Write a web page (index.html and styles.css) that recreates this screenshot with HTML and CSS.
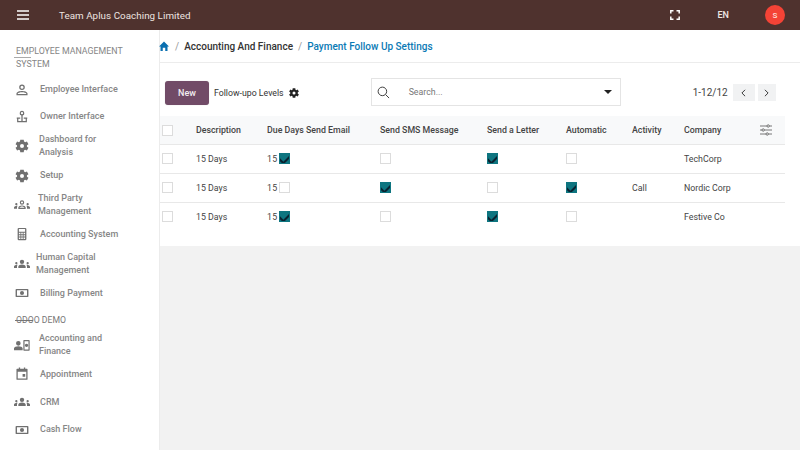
FILE: index.html
```html
<!DOCTYPE html>
<html lang="en">
<head>
<meta charset="utf-8">
<title>Payment Follow Up Settings</title>
<link rel="stylesheet" href="styles.css">
</head>
<body>
<header class="topbar">
  <svg class="burger" viewBox="0 0 12 10" width="12" height="10"><path d="M0 1h12M0 5h12M0 9h12" stroke="#fff" stroke-width="1.500"/></svg>
  <span class="company-name">Team Aplus Coaching Limited</span>
  <svg class="fullscreen" viewBox="0 0 10 10" width="10" height="10"><path d="M.8 3.500V.8h2.700M6.500 .8h2.700v2.700M9.200 6.500v2.700H6.500M3.500 9.200H.8V6.500" fill="none" stroke="#fff" stroke-width="1.500"/></svg>
  <span class="lang">EN</span>
  <span class="avatar">S</span>
</header>
<div class="body">
  <aside class="sidebar">
    <div class="section-title struck">EMPLOYEE MANAGEMENT<br>SYSTEM</div>
    <a class="item h27"><svg class="ico" viewBox="0 0 24 24"><path d="M12 2.500a4.800 4.800 0 1 1 0 9.600 4.800 4.800 0 0 1 0-9.600zm0 2.200a2.600 2.600 0 1 0 0 5.200 2.600 2.600 0 0 0 0-5.200zm0 9c3.500 0 9.500 1.300 9.500 4.300v3H2.500v-3c0-3 6-4.300 9.500-4.300zm0 2.200c-3.500 0-7.200 1.200-7.300 2.100v.8h14.600V18c-.1-.9-3.800-2.100-7.300-2.100z"/></svg><span>Employee Interface</span></a>
    <a class="item h27"><svg class="ico" viewBox="0 0 24 24"><path d="M12 1.500a4 4 0 0 1 1.100 7.850V19h5.200v-4H15v-2h6v2h-.6v6H3.600v-6H3v-2h6v2H5.700v4h5.200V9.350A4 4 0 0 1 12 1.500zm0 2.100a1.900 1.900 0 1 0 0 3.800 1.900 1.900 0 0 0 0-3.800z"/></svg><span>Owner Interface</span></a>
    <a class="item h31"><svg class="ico gear" viewBox="0 0 24 24"><path d="M19.400 13a7.500 7.500 0 0 0 0-2l2.300-1.800-2.300-4-2.700 1.100a7.500 7.500 0 0 0-1.700-1L14.600 2.500H9.400L9 5.300a7.500 7.500 0 0 0-1.700 1L4.600 5.200l-2.300 4L4.600 11a7.500 7.500 0 0 0 0 2l-2.300 1.800 2.300 4 2.700-1.100a7.500 7.500 0 0 0 1.700 1l.4 2.800h5.200l.4-2.800a7.500 7.500 0 0 0 1.700-1l2.700 1.100 2.300-4zM12 15a3 3 0 1 1 0-6 3 3 0 0 1 0 6z"/></svg><span class="shift-n1">Dashboard for<br>Analysis</span></a>
    <a class="item h29"><svg class="ico gear" viewBox="0 0 24 24"><path d="M19.400 13a7.500 7.500 0 0 0 0-2l2.300-1.800-2.300-4-2.700 1.100a7.500 7.500 0 0 0-1.700-1L14.600 2.500H9.400L9 5.300a7.500 7.500 0 0 0-1.700 1L4.600 5.200l-2.300 4L4.600 11a7.500 7.500 0 0 0 0 2l-2.300 1.800 2.300 4 2.700-1.100a7.500 7.500 0 0 0 1.700 1l.4 2.800h5.200l.4-2.800a7.500 7.500 0 0 0 1.700-1l2.700 1.100 2.300-4zM12 15a3 3 0 1 1 0-6 3 3 0 0 1 0 6z"/></svg><span>Setup</span></a>
    <a class="item h29"><svg class="ico wide" viewBox="0 0 24 24"><path d="M12 5a3.300 3.300 0 1 1 0 6.600A3.300 3.300 0 0 1 12 5zm0 1.700a1.600 1.600 0 1 0 0 3.200 1.600 1.600 0 0 0 0-3.200zM5.500 13.200c-.6.700-1 1.500-1 2.500v2H0v-2c0-1.700 3-2.500 5.500-2.500zm13 0c2.500 0 5.500.8 5.500 2.500v2h-4.500v-2c0-1-.4-1.800-1-2.500zM6.500 18v-2.300c0-2 3-3 5.500-3s5.500 1 5.500 3V18zm1.800-1.700h7.400c-.2-.9-2-1.900-3.700-1.900s-3.500 1-3.700 1.900zM3.500 9a1.700 1.700 0 1 1 0 3.400 1.700 1.700 0 0 1 0-3.400zm17 0a1.700 1.700 0 1 1 0 3.400 1.700 1.700 0 0 1 0-3.400z"/></svg><span class="shift-n2">Third Party<br>Management</span></a>
    <a class="item h30"><svg class="ico" viewBox="0 0 24 24"><path d="M6.500 1.500h11a2 2 0 0 1 2 2v17a2 2 0 0 1-2 2h-11a2 2 0 0 1-2-2v-17a2 2 0 0 1 2-2zm.2 2v4.500h10.600V3.500zm0 6.500v2.400h2.600V10zm4 0v2.400h2.600V10zm4 0v2.400h2.600V10zm-8 4v2.400h2.600V14zm4 0v2.400h2.600V14zm4 0v2.400h2.600V14zm-8 4v2.400h2.600V18zm4 0v2.400h2.600V18zm4 0v2.400h2.600V18z"/></svg><span>Accounting System</span></a>
    <a class="item h29"><svg class="ico wide" viewBox="0 0 24 24"><path d="M12 5.500a3.300 3.300 0 1 1 0 6.600 3.300 3.300 0 0 1 0-6.600zM5.500 13.200c-.6.700-1 1.500-1 2.500v2.300H0v-2.300c0-1.700 3-2.500 5.500-2.500zm13 0c2.500 0 5.500.8 5.500 2.500v2.300h-4.500v-2.300c0-1-.4-1.800-1-2.500zM6.500 18v-2.300c0-2 3-3 5.500-3s5.500 1 5.500 3V18zM3.500 9a1.700 1.700 0 1 1 0 3.400 1.700 1.700 0 0 1 0-3.400zm17 0a1.700 1.700 0 1 1 0 3.400 1.700 1.700 0 0 1 0-3.400z"/></svg><span class="shift-n4">Human Capital<br>Management</span></a>
    <a class="item h30"><svg class="ico" viewBox="0 0 24 24"><path d="M2.500 5h19a1.500 1.500 0 0 1 1.500 1.500v11a1.500 1.500 0 0 1-1.500 1.500h-19A1.500 1.500 0 0 1 1 17.500v-11A1.500 1.500 0 0 1 2.500 5zm.9 2.300v9.400h17.200V7.300zM12 8.500a3.500 3.500 0 1 1 0 7 3.500 3.500 0 0 1 0-7z"/></svg><span>Billing Payment</span></a>
    <div class="section-sub struck-sub">ODOO DEMO</div>
    <a class="item h31"><svg class="ico wide" viewBox="0 0 24 24"><path d="M6.500 6a3.500 3.500 0 1 1 0 7 3.500 3.500 0 0 1 0-7zm0 8c3 0 6.500 1 6.500 3v3H0v-3c0-2 3.500-3 6.500-3zM15 4.500h7.500a1 1 0 0 1 1 1V19.500a1 1 0 0 1-1 1H15a1 1 0 0 1-1-1V5.500a1 1 0 0 1 1-1zm.8 1.800v12.400h5.900V6.300zm3 3.700a2.500 2.500 0 1 1 0 5 2.500 2.500 0 0 1 0-5z"/></svg><span class="shift-n1">Accounting and<br>Finance</span></a>
    <a class="item h28"><svg class="ico" viewBox="0 0 24 24"><path d="M6.500 1h2.300v2h6.400V1h2.300v2h3a1 1 0 0 1 1 1v17a1 1 0 0 1-1 1h-17a1 1 0 0 1-1-1V4a1 1 0 0 1 1-1h3zm-1.800 7v11.700h14.600V8zm8.300 4h4.500v4.500H13z"/></svg><span>Appointment</span></a>
    <a class="item h28"><svg class="ico wide" viewBox="0 0 24 24"><path d="M12 5.500a3.300 3.300 0 1 1 0 6.600 3.300 3.300 0 0 1 0-6.600zM5.500 13.200c-.6.700-1 1.500-1 2.500v2.300H0v-2.300c0-1.700 3-2.500 5.500-2.500zm13 0c2.500 0 5.500.8 5.500 2.500v2.300h-4.500v-2.300c0-1-.4-1.800-1-2.500zM6.500 18v-2.300c0-2 3-3 5.500-3s5.500 1 5.500 3V18zM3.500 9a1.700 1.700 0 1 1 0 3.400 1.700 1.700 0 0 1 0-3.400zm17 0a1.700 1.700 0 1 1 0 3.400 1.700 1.700 0 0 1 0-3.400z"/></svg><span>CRM</span></a>
    <a class="item h27"><svg class="ico" viewBox="0 0 24 24"><path d="M2.500 5h19a1.500 1.500 0 0 1 1.500 1.500v11a1.500 1.500 0 0 1-1.500 1.500h-19A1.500 1.500 0 0 1 1 17.500v-11A1.500 1.500 0 0 1 2.500 5zm.9 2.300v9.400h17.200V7.300zM12 8.500a3.500 3.500 0 1 1 0 7 3.500 3.500 0 0 1 0-7z"/></svg><span>Cash Flow</span></a>
  </aside>
  <main class="main">
    <section class="panel">
      <nav class="crumbs">
        <svg class="home" viewBox="0 0 12 12" width="10" height="12"><path d="M6 .5 12 6.500h-1.800V12H7.500V8h-3v4H1.800V6.500H0z" fill="#0a6fb0"/></svg>
        <span class="sep first-sep">/</span>
        <span class="crumb">Accounting And Finance</span>
        <span class="sep">/</span>
        <span class="crumb-active">Payment Follow Up Settings</span>
      </nav>
      <div class="controls">
        <button class="btn-new">New</button>
        <span class="levels">Follow-upo Levels</span>
        <svg class="cog" viewBox="0 0 24 24" width="12" height="12"><path d="M19.400 13a7.500 7.500 0 0 0 0-2l2.300-1.800-2.300-4-2.700 1.100a7.500 7.500 0 0 0-1.700-1L14.600 2.500H9.400L9 5.300a7.500 7.500 0 0 0-1.700 1L4.600 5.200l-2.300 4L4.600 11a7.500 7.500 0 0 0 0 2l-2.300 1.800 2.300 4 2.700-1.100a7.500 7.500 0 0 0 1.700 1l.4 2.800h5.200l.4-2.800a7.500 7.500 0 0 0 1.700-1l2.700 1.100 2.300-4zM12 15a3 3 0 1 1 0-6 3 3 0 0 1 0 6z" fill="#222"/></svg>
        <div class="search">
          <svg class="lens" viewBox="0 0 14 14" width="13" height="13"><circle cx="5.800" cy="5.800" r="4.600" fill="none" stroke="#333" stroke-width="1"/><path d="M9.200 9.200 13 13" stroke="#333" stroke-width="1"/></svg>
          <span class="placeholder">Search...</span>
          <span class="caret"></span>
        </div>
        <div class="pager">
          <span class="count">1-12/12</span>
          <span class="page-btn"><svg viewBox="0 0 6 10" width="5" height="8"><path d="M5 1 1 5l4 4" fill="none" stroke="#333" stroke-width="1.200"/></svg></span>
          <span class="page-btn"><svg viewBox="0 0 6 10" width="5" height="8"><path d="M1 1l4 4-4 4" fill="none" stroke="#333" stroke-width="1.200"/></svg></span>
        </div>
      </div>
      <div class="table">
        <div class="row head">
          <span class="cell"><i class="cb"></i></span><span class="cell">Description</span><span class="cell">Due Days Send Email</span><span class="cell">Send SMS Message</span><span class="cell">Send a Letter</span><span class="cell">Automatic</span><span class="cell">Activity</span><span class="cell">Company</span>
          <span class="cell"><svg class="sliders" viewBox="0 0 12 12" width="12" height="12"><path d="M0 2h7M9.500 2H12M0 6h2M4.500 6H12M0 10h6M8.500 10H12" stroke="#555" stroke-width=".8"/><circle cx="8.200" cy="2" r="1.200" fill="none" stroke="#555" stroke-width=".8"/><circle cx="3.200" cy="6" r="1.200" fill="none" stroke="#555" stroke-width=".8"/><circle cx="7.200" cy="10" r="1.200" fill="none" stroke="#555" stroke-width=".8"/></svg></span>
        </div>
        <div class="row body-row">
          <span class="cell"><i class="cb"></i></span><span class="cell">15 Days</span><span class="cell due">15<i class="cb on"></i></span><span class="cell"><i class="cb"></i></span><span class="cell"><i class="cb on"></i></span><span class="cell"><i class="cb"></i></span><span class="cell"></span><span class="cell">TechCorp</span><span class="cell"></span>
        </div>
        <div class="row body-row">
          <span class="cell"><i class="cb"></i></span><span class="cell">15 Days</span><span class="cell due">15<i class="cb"></i></span><span class="cell"><i class="cb on"></i></span><span class="cell"><i class="cb"></i></span><span class="cell"><i class="cb on"></i></span><span class="cell">Call</span><span class="cell">Nordic Corp</span><span class="cell"></span>
        </div>
        <div class="row body-row">
          <span class="cell"><i class="cb"></i></span><span class="cell">15 Days</span><span class="cell due">15<i class="cb on"></i></span><span class="cell"><i class="cb"></i></span><span class="cell"><i class="cb on"></i></span><span class="cell"><i class="cb"></i></span><span class="cell"></span><span class="cell">Festive Co</span><span class="cell"></span>
        </div>
      </div>
    </section>
  </main>
</div>
</body>
</html>
```
FILE: styles.css
```css
* { box-sizing: border-box; }
html, body { margin: 0; height: 100%; }
body { width: 800px; height: 450px; overflow: hidden; font-family: Roboto, sans-serif; font-size: 9px; color: #333; background: #fff; display: flex; flex-direction: column; }

.topbar { height: 30px; flex: none; background: #4f322e; color: #fff; display: flex; align-items: center; padding-left: 17px; }
.burger { flex: none; }
.company-name { margin-left: 30px; font-size: 9.800px; color: #eee4e0; letter-spacing: .05px; }
.fullscreen { margin-left: auto; }
.lang { margin-left: 38px; font-size: 9px; font-weight: 500; color: #f0e8e4; }
.avatar { margin-left: 36px; margin-right: 15px; width: 20px; height: 20px; border-radius: 50%; background: #f44336; color: #fde0dc; font-size: 8px; font-weight: 500; display: flex; align-items: center; justify-content: center; }

.body { flex: 1; display: flex; min-height: 0; }
.sidebar { width: 160px; flex: none; border-right: 1px solid #ececec; padding-top: 15px; color: #7d7d7d; }
.section-title { position: relative; margin-left: 16px; font-size: 8.800px; line-height: 13px; color: #858585; margin-bottom: 5px; }
.struck::before { content: ""; position: absolute; left: -2px; top: 12px; width: 17px; height: 1px; background: #aaa; }
.section-sub { position: relative; margin-left: 16px; height: 21px; line-height: 24px; font-size: 8.700px; color: #777; }
.struck-sub::before { content: ""; position: absolute; left: -1px; top: 12px; width: 18px; height: 1px; background: #777; }

.item { display: flex; align-items: center; padding-left: 15px; font-size: 9px; font-weight: 500; line-height: 13px; color: #868686; }
.item > span { margin-left: 11px; }
.item > span.shift-n1 { margin-left: 10px; }
.item > span.shift-n2 { margin-left: 9px; }
.item > span.shift-n4 { margin-left: 7px; }
.h27 { height: 27px; }
.h28 { height: 28px; }
.h29 { height: 29px; }
.h30 { height: 30px; }
.h31 { height: 31px; }
.ico { width: 14px; height: 14px; flex: none; fill: #707070; }
.ico.gear { width: 16px; height: 16px; margin-left: -1px; margin-right: -1px; }
.ico.wide { width: 16px; height: 16px; margin-left: -1px; margin-right: -1px; }

.main { flex: 1; background: #f2f2f2; min-width: 0; }
.panel { background: #fff; height: 216px; }
.crumbs { height: 33px; border-bottom: 1px solid #ececec; display: flex; align-items: center; font-size: 10px; }
.home { margin-left: -1px; }
.sep { margin: 0 5px; color: #999; }
.first-sep { margin-left: 6px; }
.crumb { font-weight: 500; color: #333; }
.crumb-active { font-weight: 500; color: #0b7ab5; }

.controls { height: 53px; display: flex; align-items: center; padding-left: 5px; padding-top: 7px; }
.btn-new { width: 44px; height: 24px; border: 0; border-radius: 3px; background: #714b67; color: #f3edf1; font: 500 9px Roboto, sans-serif; box-shadow: 0 0 1px #0004; }
.levels { margin-left: 5px; font-size: 8.750px; color: #333; }
.cog { margin-left: 4px; }
.search { margin-left: 71px; margin-top: -2px; width: 250px; height: 28px; border: 1px solid #e4e4e4; display: flex; align-items: center; padding-left: 5px; }
.placeholder { margin-left: 19px; color: #777; font-size: 8.800px; }
.caret { margin-left: auto; margin-right: 8px; border: 4px solid transparent; border-top-color: #222; border-bottom: 0; }
.pager { margin-left: 72px; margin-top: -1px; display: flex; align-items: center; }
.count { font-size: 10px; color: #444; margin-right: 5px; }
.page-btn { width: 22px; height: 17px; background: #f1f2f3; display: flex; align-items: center; justify-content: center; margin-right: 3px; }
.page-btn:last-child { width: 18px; margin-right: 0; }

.table { width: 625px; }
.row { height: 29px; display: grid; grid-template-columns: 36px 71px 113px 107px 79px 66px 52px 76px 25px; align-items: center; border-bottom: 1px solid #e8e8e8; font-size: 8.800px; color: #444; }
.row:last-child { border-bottom: 0; height: 28px; }
.head { background: #f8f9fa; font-weight: 500; color: #444; }
.cell { display: flex; align-items: center; min-width: 0; white-space: nowrap; }
.cell:first-child { padding-left: 2px; }
.due { gap: 2px; letter-spacing: .2px; }
.cb { display: block; width: 11px; height: 11px; border: 1px solid #dcdcdc; background: #fff; flex: none; }
.body-row .cb { margin-top: -2px; }
.cb.on { position: relative; overflow: hidden; background: #0e7580; border-color: #0e7580; }
.cb.on::after { content: ""; position: absolute; left: 2px; top: -3px; width: 5px; height: 11px; border-right: 2px solid #0a2230; border-bottom: 2px solid #0a2230; transform: rotate(45deg); }
.sliders { display: block; }
```
